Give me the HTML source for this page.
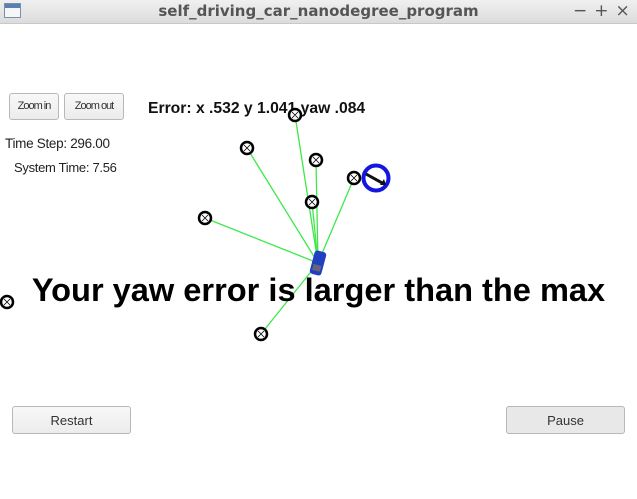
<!DOCTYPE html>
<html><head><style>
body{margin:0;width:637px;height:499px;background:#fff;position:relative;overflow:hidden;font-family:"Liberation Sans",sans-serif}
.title{position:absolute;left:0;top:0;width:637px;height:23px;background:linear-gradient(#f0f0f0,#dcdcdc);border-bottom:1px solid #c8c8c8}
.title span{position:absolute;left:0;width:637px;text-align:center;top:2px;font-family:"DejaVu Sans",sans-serif;font-weight:bold;font-size:15px;color:#555}
.btn{position:absolute;background:linear-gradient(#f8f8f8,#ececec);border:1px solid #b8b8b8;border-radius:3px;text-align:center;color:#333;box-sizing:border-box}
</style></head><body>
<div class="title"><span>self_driving_car_nanodegree_program</span>
<div style="position:absolute;left:4px;top:3px;width:17px;height:15px;border:1px solid #7a8fa8;background:linear-gradient(#5d7fb0 0 4px,#f4f6fa 4px);box-sizing:border-box"></div>
<div style="position:absolute;left:573px;top:1px;font-size:17px;color:#555;font-family:'DejaVu Sans',sans-serif;letter-spacing:7px">−+×</div></div>
<div class="btn" style="left:9px;top:93px;width:50px;height:27px;font-size:11px;line-height:25px;letter-spacing:-1px">Zoom in</div>
<div class="btn" style="left:64px;top:93px;width:60px;height:27px;font-size:11px;line-height:25px;letter-spacing:-1px">Zoom out</div>
<div style="position:absolute;left:5px;top:136px;font-size:13.5px;color:#222;letter-spacing:-0.3px">Time Step: 296.00</div>
<div style="position:absolute;left:14px;top:160px;font-size:13px;color:#222;letter-spacing:-0.3px">System Time: 7.56</div>
<div style="position:absolute;left:148px;top:100px;font-size:15.7px;font-weight:bold;color:#111">Error: x .532 y 1.041 yaw .084</div>
<svg style="position:absolute;left:0;top:0" width="637" height="499">
<g stroke="#3ee84a" stroke-width="1.3">
<line x1="318" y1="263" x2="295" y2="115"/><line x1="318" y1="263" x2="247" y2="148"/>
<line x1="318" y1="263" x2="316" y2="160"/><line x1="318" y1="263" x2="354" y2="178"/>
<line x1="318" y1="263" x2="312" y2="202"/><line x1="318" y1="263" x2="205" y2="218"/>
<line x1="318" y1="263" x2="261" y2="334"/></g>
<g fill="#fff" stroke="#000" stroke-width="2.5">
<circle cx="295" cy="115" r="6"/><circle cx="247" cy="148" r="6"/><circle cx="316" cy="160" r="6"/>
<circle cx="354" cy="178" r="6"/><circle cx="312" cy="202" r="6"/><circle cx="205" cy="218" r="6"/>
<circle cx="7" cy="302" r="6"/><circle cx="261" cy="334" r="6"/></g>
<g stroke="#000" stroke-width="0.8">
<path d="M292 112l6 6M298 112l-6 6M244 145l6 6M250 145l-6 6M313 157l6 6M319 157l-6 6M351 175l6 6M357 175l-6 6M309 199l6 6M315 199l-6 6M202 215l6 6M208 215l-6 6M4 299l6 6M10 299l-6 6M258 331l6 6M264 331l-6 6"/></g>
<circle cx="376" cy="178" r="12.5" fill="none" stroke="#1515e0" stroke-width="4"/>
<path d="M366 174L384 184" stroke="#111" stroke-width="3"/><path d="M380 185l6 0-2-6z" fill="#111"/>
<g transform="rotate(15 318 263)"><rect x="312" y="251" width="12" height="24" rx="3" fill="#2040c0"/><rect x="314" y="265" width="8" height="6" fill="#667"/></g>
</svg>
<div style="position:absolute;left:0;top:271px;width:637px;text-align:center;font-size:32.6px;font-weight:bold;color:#000">Your yaw error is larger than the max</div>
<div class="btn" style="left:12px;top:406px;width:119px;height:28px;font-size:13px;line-height:28px">Restart</div>
<div class="btn" style="left:506px;top:406px;width:119px;height:28px;font-size:13px;line-height:28px;background:#e8e8e8">Pause</div>
</body></html>
